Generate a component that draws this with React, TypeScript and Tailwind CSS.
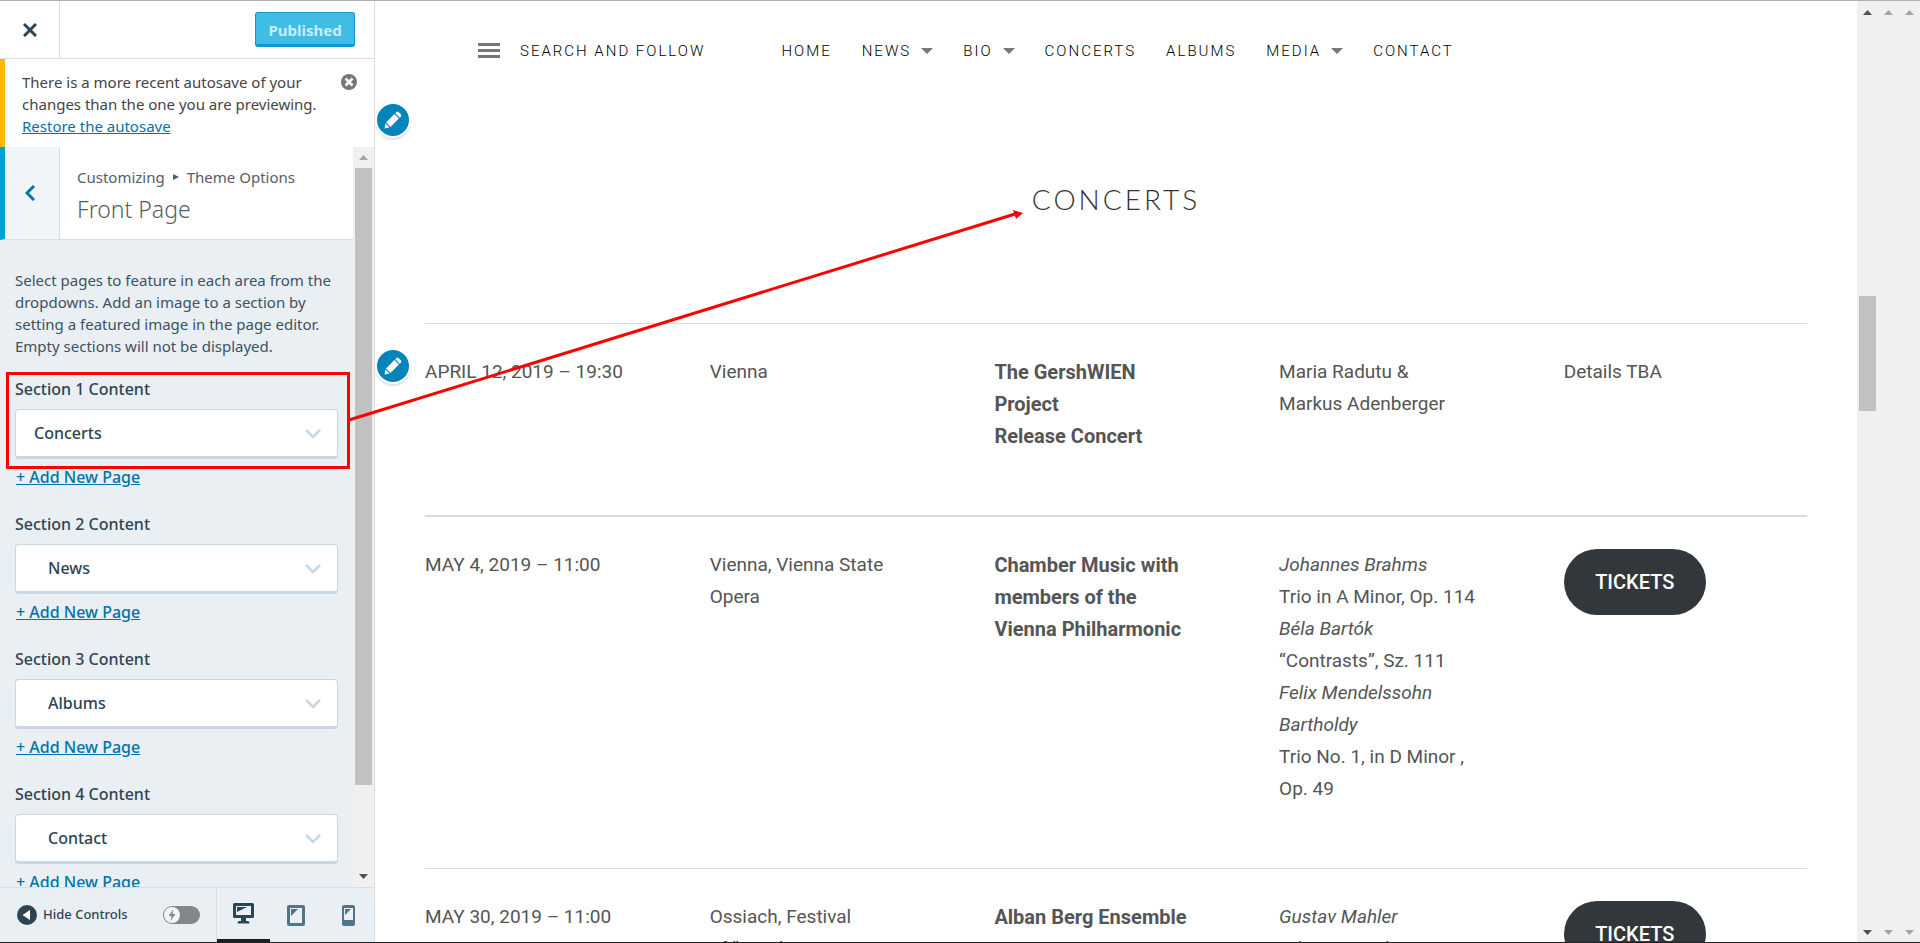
import { useState } from 'react';
import type { ReactNode } from 'react';

const SECTIONS = [
    { id: 1, value: 'Concerts', nested: false },
    { id: 2, value: 'News', nested: true },
    { id: 3, value: 'Albums', nested: true },
    { id: 4, value: 'Contact', nested: true },
];

const PAGES = ['Concerts', 'News', 'Albums', 'Contact'];

const NAV = [
    { label: 'Home', sub: false },
    { label: 'News', sub: true },
    { label: 'Bio', sub: true },
    { label: 'Concerts', sub: false },
    { label: 'Albums', sub: false },
    { label: 'Media', sub: true },
    { label: 'Contact', sub: false },
];

type Concert = {
    date: string;
    place: ReactNode;
    title: ReactNode;
    program: ReactNode;
    tickets: boolean;
    rule: string;
};

const CONCERTS: Concert[] = [
    {
        date: 'APRIL 12, 2019 – 19:30',
        place: 'Vienna',
        title: <>The GershWIEN<br />Project<br />Release Concert</>,
        program: <>Maria Radutu &amp;<br />Markus Adenberger</>,
        tickets: false,
        rule: 'border-t',
    },
    {
        date: 'MAY 4, 2019 – 11:00',
        place: <>Vienna, Vienna State<br />Opera</>,
        title: <>Chamber Music with<br />members of the<br />Vienna Philharmonic</>,
        program: (
            <>
                <em>Johannes Brahms</em><br />
                Trio in A Minor, Op. 114<br />
                <em>Béla Bartók</em><br />
                “Contrasts”, Sz. 111<br />
                <em>Felix Mendelssohn<br />Bartholdy</em><br />
                Trio No. 1, in D Minor ,<br />
                Op. 49
            </>
        ),
        tickets: true,
        rule: 'border-t-2',
    },
    {
        date: 'MAY 30, 2019 – 11:00',
        place: <>Ossiach, Festival<br />of “Wörthersee</>,
        title: 'Alban Berg Ensemble',
        program: <><em>Gustav Mahler</em><br />Adagio aus der</>,
        tickets: true,
        rule: 'border-t',
    },
];

function Arrow({ up, className }: { up?: boolean; className?: string }) {
    return (
        <svg viewBox="0 0 9 5" className={`h-[5px] w-[9px] ${className ?? ''}`} fill="currentColor" aria-hidden="true">
            <path d={up ? 'M0 5 4.5 0 9 5z' : 'M0 0 4.5 5 9 0z'} />
        </svg>
    );
}

function EditButton({ className }: { className: string }) {
    return (
        <button
            aria-label="Edit"
            className={`absolute left-0 flex size-9 items-center justify-center rounded-full border-2 border-white bg-[#0085ba] text-white shadow-[0_2px_1px_rgba(46,68,83,0.15)] ${className}`}
        >
            <svg viewBox="0 0 18 18" className="size-[18px]" fill="currentColor" aria-hidden="true">
                <path d="M12.300 1.200q1.200-1.200 2.400 0l2.100 2.100q1.200 1.200 0 2.400l-1 1-4.500-4.500z" />
                <path d="M10.400 3.100 14.900 7.600 6.500 16 5.200 14.700 3.300 12.800 2 11.500z" />
                <path d="M1.500 12.600 5.400 16.500 0.500 17.500z" />
            </svg>
        </button>
    );
}

// --- Sidebar ------------------------------
function SectionControl({ id, value, nested }: { id: number; value: string; nested: boolean }) {
    const [page, setPage] = useState(value);

    return (
        <div className="flex h-[135px] shrink-0 flex-col items-start">
            <label htmlFor={`section-${id}`} className="text-base leading-6 font-medium text-[#2e4453]">
                Section {id} Content
            </label>
            <div className="relative mt-2 w-full">
                <select
                    id={`section-${id}`}
                    value={page}
                    onChange={(e) => setPage(e.target.value)}
                    className={`h-[50px] w-full appearance-none rounded-[4px] border border-b-[3px] border-[#c8d7e1] bg-white pr-10 text-base font-medium text-[#2e4453] ${nested ? 'pl-8' : 'pl-[18px]'}`}
                >
                    {PAGES.map((p) => <option key={p}>{p}</option>)}
                </select>
                <svg viewBox="0 0 16 10" className="pointer-events-none absolute top-5 right-[17px] h-[10px] w-4" fill="none" stroke="#c8d7e1" strokeWidth="2.6" aria-hidden="true">
                    <path d="M1 1 8 8 15 1" />
                </svg>
            </div>
            <a href="#add" className="mt-[6px] px-px text-base leading-6 font-medium text-[#0073aa] underline">
                + Add New Page
            </a>
        </div>
    );
}

function Sidebar() {
    const [device, setDevice] = useState('desktop');

    return (
        <aside className="flex w-[375px] shrink-0 flex-col border-r border-[#d5e0e8] bg-[#e9eff3] font-['Noto_Sans',sans-serif]">
            <div className="flex h-[58px] shrink-0 items-center justify-between border-b border-[#d5e0e8] bg-white pr-[19px]">
                <button aria-label="Close" className="flex h-full w-[60px] items-center justify-center border-r border-[#d5e0e8]">
                    <svg viewBox="0 0 14 14" className="size-[14px]" fill="none" stroke="#2e4453" strokeWidth="3" aria-hidden="true">
                        <path d="M1 1 13 13M13 1 1 13" />
                    </svg>
                </button>
                <button className="h-[35px] w-[100px] rounded-[3px] border border-b-[3px] border-[#1296cb] bg-[#3fbde5] pt-[3px] text-[15px] font-bold text-[#c9edf8]">
                    Published
                </button>
            </div>

            <div className="flex h-[88px] shrink-0 justify-between border-l-[5px] border-[#ffb900] bg-white pt-3 pr-[17px] pl-[17px] text-[15px] leading-[22px] text-[#444]">
                <p>
                    There is a more recent autosave of your<br />
                    changes than the one you are previewing.<br />
                    <a href="#restore" className="text-[#0073aa] underline">Restore the autosave</a>
                </p>
                <button aria-label="Dismiss" className="mt-[3px] size-4 shrink-0">
                    <svg viewBox="0 0 16 16" className="size-4" aria-hidden="true">
                        <circle cx="8" cy="8" r="8" fill="#72777c" />
                        <path d="M4.500 4.500 11.500 11.500M11.500 4.500 4.500 11.500" stroke="#fff" strokeWidth="2.600" />
                    </svg>
                </button>
            </div>

            <div className="flex min-h-0 flex-1">
                <div className="flex min-w-0 flex-1 flex-col overflow-hidden">
                    <div className="flex h-[93px] shrink-0 border-b border-l-[5px] border-b-[#d5e0e8] border-l-[#00a0d2] bg-white">
                        <button aria-label="Back" className="flex w-[55px] items-center justify-center border-r border-[#d5e0e8] bg-[#f1f5f8] pr-1">
                            <svg viewBox="0 0 10 16" className="h-4 w-[10px]" fill="none" stroke="#0073aa" strokeWidth="3" aria-hidden="true">
                                <path d="M9 1 2 8 9 15" />
                            </svg>
                        </button>
                        <div className="flex flex-col justify-center pt-2 pl-[17px] text-[#555d66]">
                            <p className="flex items-center gap-2 text-[15px] leading-6">
                                Customizing
                                <svg viewBox="0 0 6 6" className="size-[6px]" fill="currentColor" aria-hidden="true"><path d="M0 0 6 3 0 6z" /></svg>
                                Theme Options
                            </p>
                            <h1 className="text-[23px] leading-10 font-light">Front Page</h1>
                        </div>
                    </div>
                    <div className="flex flex-col px-[15px]">
                        <p className="mt-[29px] mb-5 text-[15px] leading-[22px] whitespace-nowrap text-[#3d5262]">
                            Select pages to feature in each area from the<br />
                            dropdowns. Add an image to a section by<br />
                            setting a featured image in the page editor.<br />
                            Empty sections will not be displayed.
                        </p>
                        {SECTIONS.map((s) => <SectionControl key={s.id} {...s} />)}
                    </div>
                </div>
                <div className="flex w-[21px] shrink-0 flex-col items-center bg-[#f0f0f0] text-[#505050]">
                    <Arrow up className="my-2 text-[#a3a3a3]" />
                    <div className="h-[617px] w-[17px] bg-[#c1c1c1]" />
                    <Arrow className="mt-auto mb-2" />
                </div>
            </div>

            <div className="flex h-[55px] shrink-0 items-stretch border-t border-[#d5e0e8]">
                <button className="flex flex-1 items-center gap-[6px] pl-[17px] text-[13px] font-medium text-[#2e4453]">
                    <svg viewBox="0 0 20 20" className="size-5" aria-hidden="true">
                        <circle cx="10" cy="10" r="10" fill="#2e4453" />
                        <path d="M13 5v10L5.500 10z" fill="#fff" />
                    </svg>
                    Hide Controls
                </button>
                <button role="switch" aria-checked="false" aria-label="Live preview" className="mr-4 flex h-[18px] w-[37px] items-center self-center rounded-full bg-[#82878c]">
                    <svg viewBox="0 0 18 18" className="size-[18px]" aria-hidden="true">
                        <circle cx="9" cy="9" r="8" fill="#f3f5f6" />
                        <path d="M10.500 3 5.500 10h3l-1 5 5-7h-3z" fill="#82878c" />
                    </svg>
                </button>
                <div className="flex w-[158px] border-l border-[#dcdcdc] text-[#4f748e]">
                    <button aria-label="Desktop" onClick={() => setDevice('desktop')} className={`flex w-[53px] items-center justify-center text-[#2e4453] ${device === 'desktop' ? 'border-b-[3px] border-[#191e23]' : ''}`}>
                        <svg viewBox="0 0 21 21" className="size-[21px]" fill="currentColor" fillRule="evenodd" aria-hidden="true">
                            <path d="M1.500 0h18Q21 0 21 1.500v12Q21 15 19.500 15H13v3h2q1.500 0 1.500 2.500h-12Q4.500 18 6 18h2v-3H1.500Q0 15 0 13.500v-12Q0 0 1.500 0zM3 3v9h15V3zM4 4h10L4 9z" />
                        </svg>
                    </button>
                    <button aria-label="Tablet" onClick={() => setDevice('tablet')} className={`flex w-[52px] items-center justify-center ${device === 'tablet' ? 'border-b-[3px] border-[#191e23]' : ''}`}>
                        <svg viewBox="0 0 18 21" className="h-[21px] w-[18px]" fill="currentColor" fillRule="evenodd" aria-hidden="true">
                            <path d="M2 0h14q2 0 2 2v17q0 2-2 2H2q-2 0-2-2V2Q0 0 2 0zM3 3v15h12V3zM4 4h7L4 11z" />
                        </svg>
                    </button>
                    <button aria-label="Phone" onClick={() => setDevice('phone')} className={`flex w-[52px] items-center justify-center ${device === 'phone' ? 'border-b-[3px] border-[#191e23]' : ''}`}>
                        <svg viewBox="0 0 13 21" className="h-[21px] w-[13px]" fill="currentColor" fillRule="evenodd" aria-hidden="true">
                            <path d="M2 0h9q2 0 2 2v17q0 2-2 2H2q-2 0-2-2V2Q0 0 2 0zM2 3v12h9V3zM3 4h6L3 10z" />
                        </svg>
                    </button>
                </div>
            </div>
        </aside>
    );
}

// --- Site preview -------------------------
function Preview() {
    return (
        <main className="relative min-w-0 flex-1 overflow-hidden bg-white font-[Roboto,sans-serif]">
            <EditButton className="top-[101px]" />
            <EditButton className="top-[347px]" />

            <header className="flex h-[100px] items-center pl-[103px] text-[15px] font-light tracking-[2px] text-black uppercase">
                <button className="flex items-center gap-5 uppercase">
                    <svg viewBox="0 0 22 16" className="h-4 w-[22px]" fill="#777" aria-hidden="true">
                        <path d="M0 0h22v3H0zM0 6h22v3H0zM0 12h22v3H0z" />
                    </svg>
                    <span>Search and Follow</span>
                </button>
                <nav className="ml-[76px] flex items-center gap-[30px]">
                    {NAV.map((n) => (
                        <a key={n.label} href={`#${n.label.toLowerCase()}`} className="flex items-center gap-[10px]">
                            {n.label}
                            {n.sub && (
                                <svg viewBox="0 0 12 6" className="h-[6px] w-3" fill="#777" aria-hidden="true"><path d="M0 0h12L6 6z" /></svg>
                            )}
                        </a>
                    ))}
                </nav>
            </header>

            <section className="px-[50px]">
                <h2 className="pt-[77px] pb-[102px] text-center font-[Lato,sans-serif] text-[28px] leading-[43px] font-light tracking-[3px] text-[#333]">
                    CONCERTS
                </h2>
                <table className="w-full table-fixed border-separate border-spacing-0 text-left text-[19px] leading-8 text-[#555]">
                    <tbody>
                        {CONCERTS.map((c) => (
                            <tr key={c.date} className="align-top [&>td]:border-[#ddd] [&>td]:pt-8 [&>td]:pb-[63px]">
                                <td className={`w-[20.6%] ${c.rule}`}>{c.date}</td>
                                <td className={`w-[20.6%] ${c.rule}`}>{c.place}</td>
                                <td className={`w-[20.6%] text-xl leading-8 font-bold ${c.rule}`}>{c.title}</td>
                                <td className={`w-[20.6%] ${c.rule}`}>{c.program}</td>
                                <td className={c.rule}>
                                    {c.tickets ? (
                                        <a href="#tickets" className="flex h-[66px] w-[142px] items-center justify-center rounded-full bg-[#32373c] text-xl font-medium text-white">
                                            TICKETS
                                        </a>
                                    ) : 'Details TBA'}
                                </td>
                            </tr>
                        ))}
                    </tbody>
                </table>
            </section>
        </main>
    );
}

export default function App() {
    return (
        <div className="relative flex h-screen flex-col overflow-hidden border-t border-b border-t-[#b0b0b0] border-b-[#222]">
            <div className="flex min-h-0 flex-1">
                <Sidebar />
                <Preview />
                <div className="flex shrink-0 bg-[#f0f0f0]">
                    <div className="flex w-[21px] flex-col items-center text-[#505050]">
                        <Arrow up className="mt-[9px]" />
                        <div className="mt-[281px] h-[115px] w-[17px] bg-[#c1c1c1]" />
                        <Arrow className="mt-auto mb-[7px]" />
                    </div>
                    {[0, 1].map((i) => (
                        <div key={i} className="flex w-[21px] flex-col items-center justify-between pt-[9px] pb-[7px] text-[#a3a3a3]">
                            <Arrow up />
                            <Arrow />
                        </div>
                    ))}
                </div>
            </div>

            {/* callout from the first dropdown to the page heading */}
            <svg viewBox="0 0 1040 480" className="pointer-events-none absolute top-0 left-0 h-[480px] w-[1040px]" aria-hidden="true">
                <rect x="7.500" y="372.500" width="341" height="94" fill="none" stroke="#f00" strokeWidth="3" />
                <path d="M349 419 1015 213" stroke="#f00" strokeWidth="3" />
                <path d="M1023 212 1013 209 1016 218z" fill="#f00" />
            </svg>
        </div>
    );
}
